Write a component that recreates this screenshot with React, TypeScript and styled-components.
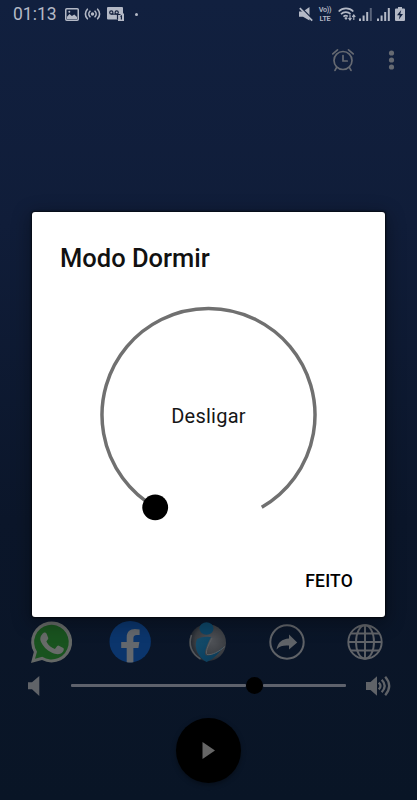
import React from 'react';
import styled, { createGlobalStyle } from 'styled-components';

const GlobalStyle = createGlobalStyle`
  * { box-sizing: border-box; }
  body { margin: 0; background: #0b1629; font-family: Roboto, "Liberation Sans", sans-serif; }
  button { border: 0; padding: 0; background: none; font: inherit; color: inherit; }
  svg { display: block; overflow: visible; }
`;

const Screen = styled.div`
  position: relative;
  width: 417px;
  height: 800px;
  overflow: hidden;
  display: flex;
  flex-direction: column;
  background: linear-gradient(#11203f 0%, #101d39 28%, #0b162a 65%, #091526 100%);
`;

const StatusBar = styled.header`
  height: 28px;
  flex: none;
  display: flex;
  justify-content: space-between;
  padding: 0 12px 0 13px;
  color: #b4b9c6;
`;

const StatusGroup = styled.div<{ $gap: number }>`
  display: flex;
  align-items: center;
  gap: ${(p) => p.$gap}px;
`;

const Clock = styled.span`
  width: 43px;
  margin-right: 2px;
  font-size: 17.5px;
  line-height: 28px;
  white-space: nowrap;
`;

const NotificationDot = styled.span`
  width: 3px;
  height: 3px;
  margin-left: 5px;
  border-radius: 50%;
  background: currentColor;
`;

const VoLte = styled.div`
  width: 14px;
  display: flex;
  flex-direction: column;
  align-items: center;
  gap: 0;
  margin: 0 1px 0 0;
  font-size: 7.2px;
  font-weight: 600;
  line-height: 9px;
  letter-spacing: -0.25px;
  white-space: nowrap;
`;

const Toolbar = styled.nav`
  height: 64px;
  flex: none;
  display: flex;
  justify-content: flex-end;
  align-items: center;
  gap: 35px;
  padding-right: 23px;
  color: #666a72;
`;

const Player = styled.footer`
  margin-top: auto;
  height: 184px;
  display: flex;
  flex-direction: column;
  color: #606368;
`;

const SocialRow = styled.div`
  height: 52px;
  display: flex;
  justify-content: space-between;
  align-items: center;
  padding: 0 31px 0 30px;
`;

const SocialButton = styled.button`
  width: 42px;
  height: 42px;
  display: grid;
  place-items: center;
`;

const VolumeRow = styled.div`
  height: 35px;
  display: flex;
  align-items: center;
  padding: 0 26px 0 28px;
`;

const VolumeTrack = styled.div`
  flex: 1;
  display: flex;
  align-items: center;
  margin: 0 20px 0 31px;
`;

const TrackLine = styled.span<{ $grow: number }>`
  flex: ${(p) => p.$grow} 1 0;
  height: 3px;
  border-radius: 1px;
  background: #5e626c;
`;

const TrackThumb = styled.span`
  width: 17px;
  height: 17px;
  border-radius: 50%;
  background: #000;
`;

const PlayButton = styled.button`
  width: 65px;
  height: 65px;
  margin: 15px auto 0;
  display: grid;
  place-items: center;
  border-radius: 50%;
  background: #000;
  box-shadow: 0 2px 5px rgba(0, 0, 0, 0.35);
`;

const Overlay = styled.div`
  position: absolute;
  inset: 0;
  padding: 212px 32px 183px;
`;

const Dialog = styled.section`
  width: 353px;
  height: 405px;
  display: flex;
  flex-direction: column;
  align-items: center;
  border-radius: 3px;
  background: #fff;
  box-shadow: 0 0 2px 1px rgba(0, 0, 0, 0.65), 0 4px 18px 3px rgba(0, 0, 0, 0.3);
`;

const DialogTitle = styled.h1`
  align-self: stretch;
  margin: 30px 0 0 28px;
  font-size: 25.5px;
  font-weight: 500;
  line-height: 32px;
  letter-spacing: 0;
  color: #111;
`;

const Dial = styled.div`
  margin-top: 31px;
  width: 220px;
  height: 220px;
  display: grid;
  place-items: center;
  > * { grid-area: 1 / 1; }
`;

const DialLabel = styled.span`
  padding-top: 2px;
  font-size: 20px;
  line-height: 24px;
  letter-spacing: 0.25px;
  color: #161616;
`;

const DialogAction = styled.button`
  margin: 44px 32px 0 auto;
  font-size: 17.5px;
  font-weight: 500;
  line-height: 24px;
  letter-spacing: 0.2px;
  color: #000;
`;

const PictureIcon = () => (
  <svg width="14" height="13" viewBox="0 0 14 13" fill="none" stroke="currentColor" strokeWidth="1.5">
    <rect x=".75" y=".75" width="12.5" height="11.5" rx="1" />
    <path d="M2 8.7 4.5 6l2.4 2 2.4-1.6L12 9v2H2z" fill="currentColor" stroke="none" />
    <circle cx="4.3" cy="3.7" r="1" fill="currentColor" stroke="none" />
  </svg>
);

const BroadcastIcon = () => (
  <svg width="15" height="12" viewBox="0 0 15 12" fill="none" stroke="currentColor" strokeWidth="1.6" strokeLinecap="round">
    <circle cx="7.5" cy="6" r="1.7" fill="currentColor" stroke="none" />
    <path d="M5 3.2a4 4 0 0 0 0 5.6M10 3.2a4 4 0 0 1 0 5.6M2.4 1.2a6.8 6.8 0 0 0 0 9.6M12.6 1.2a6.8 6.8 0 0 1 0 9.6" />
  </svg>
);

const VoicemailIcon = () => (
  <svg width="17" height="14" viewBox="0 0 17 14">
    <path d="M1 0h14q1 0 1 1v5.500h1V14h-6v-1.500H1q-1 0-1-1V1q0-1 1-1" fill="currentColor" />
    <g fill="none" stroke="#17233f" strokeWidth="1.2">
      <circle cx="4.3" cy="5.5" r="1.6" />
      <circle cx="9.7" cy="5.5" r="1.6" />
      <path d="M4.300 7.100h5.400M10.500 12.500V7.500H13.500M14.400 12.500V9l-1 .6" />
    </g>
  </svg>
);

const MutedIcon = () => (
  <svg width="14" height="15" viewBox="0 0 14 15">
    <path d="M0 4.500h4L10.500 0v13.500L4 9.800H0z" fill="currentColor" />
    <path d="M2.200.8 13.500 12.200" stroke="#11203f" strokeWidth="1.600" />
    <path d="M.8 1.200 13.200 13.600" stroke="currentColor" strokeWidth="1.700" />
  </svg>
);

const WifiIcon = () => (
  <svg width="18" height="14" viewBox="0 0 18 14" fill="none" stroke="currentColor" strokeWidth="1.7">
    <path d="M.7 4.5a10.3 10.3 0 0 1 14.6 0M3 7.2a7 7 0 0 1 9.5-.3M5.4 9.7a3.7 3.7 0 0 1 4.4-.3" />
    <path d="m6.2 11 1.8 2 1.7-2-1.7-1z" fill="currentColor" stroke="none" />
    <path d="M12 7.5v5M10.500 11l1.500 2 1.500-2M15.800 13V8M14.300 9.800l1.500-2 1.500 2" strokeWidth="1.1" />
  </svg>
);

const SignalIcon = ({ weak }: { weak?: boolean }) => (
  <svg width="13" height="13" viewBox="0 0 13 13" fill="currentColor">
    <path d="M0 10.5h2V13H0zM3.6 7.5h2V13h-2z" />
    <path d="M7.2 4h2v9h-2z" />
    <path d="M10.8 0h2v13h-2z" opacity={weak ? 0.45 : 1} />
  </svg>
);

const BatteryIcon = () => (
  <svg width="10" height="14" viewBox="0 0 10 14">
    <path d="M3 0h4v1.5h2q1 0 1 1V13q0 1-1 1H1q-1 0-1-1V2.500q0-1 1-1h2z" fill="currentColor" />
    <path d="M6.200 3 2 8.300h2.700L3.900 12.500 8 7H5.300z" fill="#11203f" />
  </svg>
);

const AlarmIcon = () => (
  <svg width="22" height="22" viewBox="0 0 22 22" fill="none" stroke="currentColor" strokeWidth="1.7" strokeLinecap="round">
    <circle cx="11" cy="11.500" r="9" />
    <path d="M11 6.500V12h4.200M.8 4.900 5.500.9M21.200 4.900 16.500.9M4.500 18.700l-1.500 2.700M17.500 18.700l1.500 2.700" />
  </svg>
);

const MoreIcon = () => (
  <svg width="5" height="20" viewBox="0 0 5 20" fill="currentColor">
    <circle cx="2.500" cy="3" r="2.600" /><circle cx="2.500" cy="10" r="2.600" /><circle cx="2.500" cy="17" r="2.600" />
  </svg>
);

const WhatsAppIcon = () => (
  <svg width="42" height="42" viewBox="0 0 42 42">
    <path d="M1 42 3.800 31A20.500 20.500 0 1 1 12 39z" fill="#646866" />
    <path d="m5 37.700 2-7A17.300 17.300 0 1 1 12.200 35.800z" fill="#19531f" />
    <path d="M12 13.500c2-3 4-2 4.600-.7l1.700 4.100c.3 1-1.500 2.700-1.900 3.500 2 4 4.800 6 8.500 7.500l2.300-2.800q.7-.8 1.700-.3l4.400 2.200c1 .6.500 3-.8 4.300-3 3-7 2-11 .3-5-2.300-8.500-6.300-10.500-10.500-1.300-3-.8-5.600 1-7.600" fill="#676b69" />
  </svg>
);

const FacebookIcon = () => (
  <svg width="42" height="42" viewBox="0 0 42 42">
    <circle cx="21.200" cy="20.700" r="20.700" fill="#0b356c" />
    <path d="M17.700 41.200V27h-5.500v-6h5.500v-4.600c0-5.500 3.300-8.300 8.200-8.300q2.500 0 4.700.4V14h-2.700c-2.700 0-3.500 1.600-3.500 3.400V21h6l-1 6h-5v14.200q-3 .4-6.700 0" fill="#64686d" />
  </svg>
);

const InfoLogo = () => (
  <svg width="42" height="42" viewBox="0 0 42 42">
    <defs>
      <radialGradient id="metal" cx=".6" cy=".45" r=".58">
        <stop offset="0" stopColor="#505358" /><stop offset=".75" stopColor="#393c41" /><stop offset="1" stopColor="#20262f" />
      </radialGradient>
      <linearGradient id="stem" x2="1" y2="1">
        <stop stopColor="#174e6b" /><stop offset=".6" stopColor="#0c4161" /><stop offset="1" stopColor="#12364c" />
      </linearGradient>
    </defs>
    <circle cx="20.500" cy="21.700" r="18.500" fill="url(#metal)" />
    <path d="M4.500 14q-5 15 9 24" fill="none" stroke="#54585d" strokeWidth="1.500" />
    <path d="M10 18q6-3 14-2c-4 8-7 15-5.500 18 3 2 11-2 17.500-8-5 8-11 13-16.500 15C12 37 6 27 10 18" fill="url(#stem)" />
    <path d="M25 17c-4 8-7 14-5 16.500 5 1 12-3 18-8" fill="none" stroke="#5b5f63" strokeWidth="1" />
    <ellipse cx="19.500" cy="7.500" rx="7" ry="6.200" fill="#0d4566" />
  </svg>
);

const ShareIcon = () => (
  <svg width="36" height="36" viewBox="0 0 36 36">
    <circle cx="18" cy="18" r="16.700" fill="none" stroke="currentColor" strokeWidth="2" />
    <path d="M7.500 25.500C9 18 13 15 20 14.500V10.500l8.200 8-8.200 7V21.500c-5-.3-9 0-12.500 4" fill="currentColor" />
  </svg>
);

const GlobeIcon = () => (
  <svg width="36" height="36" viewBox="0 0 36 36" fill="none" stroke="currentColor" strokeWidth="1.900">
    <circle cx="18" cy="18" r="16.700" />
    <ellipse cx="18" cy="18" rx="9" ry="16.700" />
    <path d="M18 1v34M1 18h34M4 9.500h28M4 26.500h28" />
  </svg>
);

const VolumeLowIcon = () => (
  <svg width="12" height="20" viewBox="0 0 12 20"><path d="M0 6.300h4L11.300 0v20L4 13.300H0z" fill="currentColor" /></svg>
);

const VolumeHighIcon = () => (
  <svg width="25" height="20" viewBox="0 0 25 20">
    <path d="M0 6h4.500L11 .2v19.600L4.500 14H0z" fill="currentColor" />
    <path d="M12.700 6.600q3.600 3.400 0 6.800M15.700 3.800q6 6.200 0 12.400M19.200.8q8 9.200 0 18.400" fill="none" stroke="currentColor" strokeWidth="2.300" />
  </svg>
);

const PlayIcon = () => (
  <svg width="13" height="17" viewBox="0 0 13 17"><path d="M.5 0 13 8.500.5 17z" fill="#666" /></svg>
);

const DialRing = () => (
  <svg width="220" height="220" viewBox="0.5 0 220 220">
    <path d="M56.750 202.230A106.500 106.500 0 1 1 163.250 202.230" fill="none" stroke="#707070" strokeWidth="3.500" />
    <circle cx="56.700" cy="202.300" r="12.900" fill="#000" />
  </svg>
);

export default function App() {
  return (
    <Screen>
      <GlobalStyle />
      <StatusBar>
        <StatusGroup $gap={6.5}>
          <Clock>01:13</Clock>
          <PictureIcon />
          <BroadcastIcon />
          <VoicemailIcon />
          <NotificationDot />
        </StatusGroup>
        <StatusGroup $gap={5}>
          <StatusGroup $gap={5}>
            <MutedIcon />
            <VoLte><span>Vo))</span><span>LTE</span></VoLte>
          </StatusGroup>
          <StatusGroup $gap={3}>
            <WifiIcon />
            <SignalIcon weak />
          </StatusGroup>
          <SignalIcon />
          <BatteryIcon />
        </StatusGroup>
      </StatusBar>
      <Toolbar>
        <button aria-label="Alarme"><AlarmIcon /></button>
        <button aria-label="Mais opções"><MoreIcon /></button>
      </Toolbar>
      <Player>
        <SocialRow>
          <SocialButton aria-label="WhatsApp"><WhatsAppIcon /></SocialButton>
          <SocialButton aria-label="Facebook"><FacebookIcon /></SocialButton>
          <SocialButton aria-label="Informações"><InfoLogo /></SocialButton>
          <SocialButton aria-label="Compartilhar"><ShareIcon /></SocialButton>
          <SocialButton aria-label="Site"><GlobeIcon /></SocialButton>
        </SocialRow>
        <VolumeRow>
          <VolumeLowIcon />
          <VolumeTrack>
            <TrackLine $grow={175} />
            <TrackThumb />
            <TrackLine $grow={83} />
          </VolumeTrack>
          <VolumeHighIcon />
        </VolumeRow>
        <PlayButton aria-label="Reproduzir"><PlayIcon /></PlayButton>
      </Player>
      <Overlay>
        <Dialog role="dialog" aria-labelledby="sleep-title">
          <DialogTitle id="sleep-title">Modo Dormir</DialogTitle>
          <Dial>
            <DialRing />
            <DialLabel>Desligar</DialLabel>
          </Dial>
          <DialogAction>FEITO</DialogAction>
        </Dialog>
      </Overlay>
    </Screen>
  );
}
